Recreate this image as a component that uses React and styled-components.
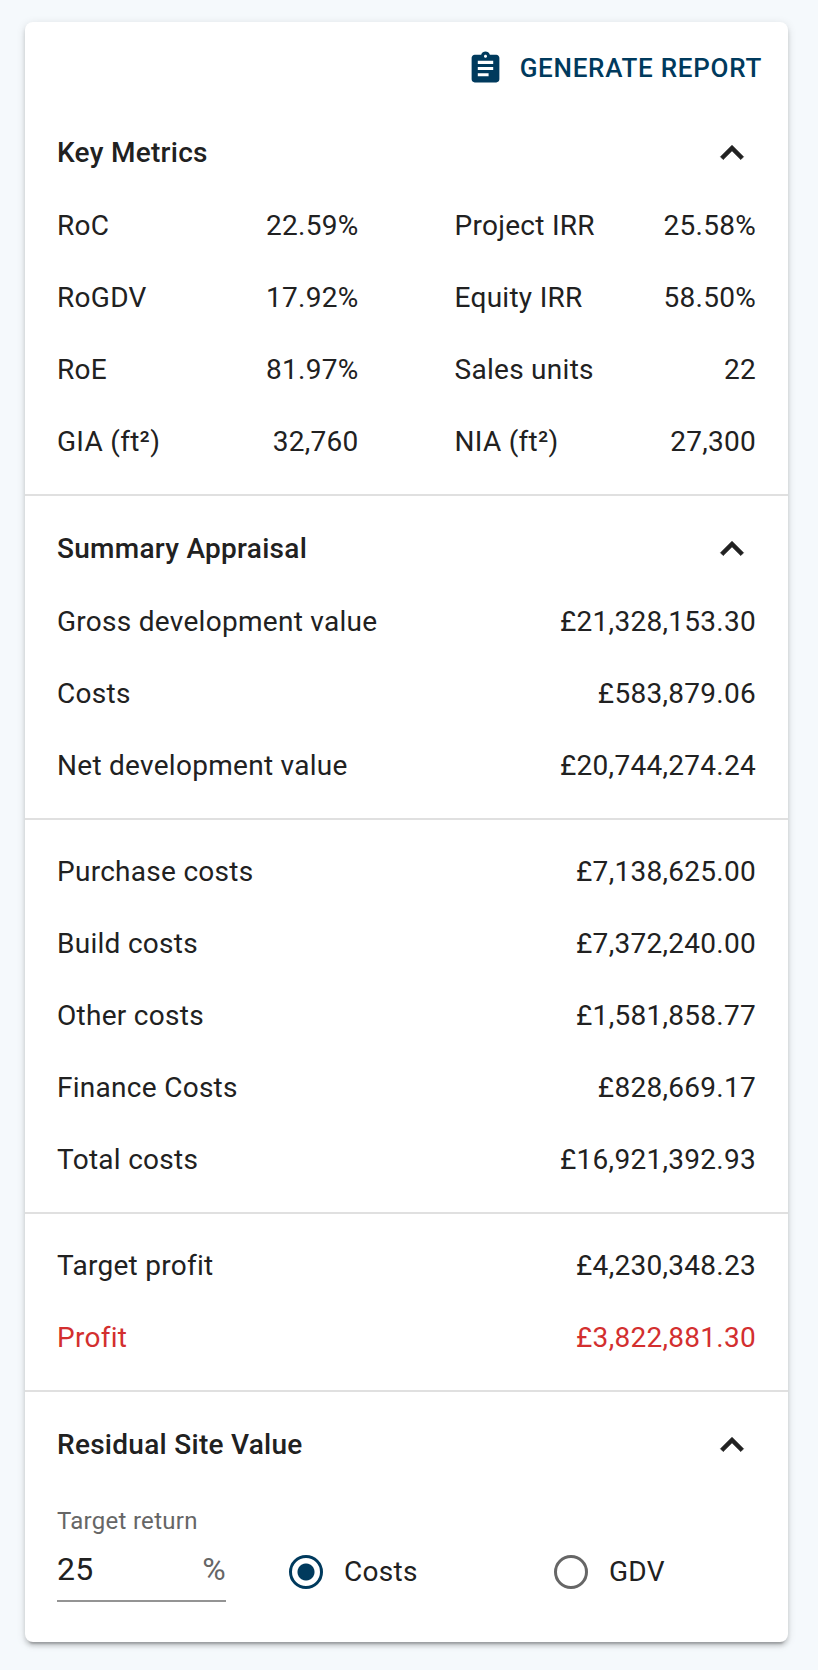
import React, { useState } from 'react';
import styled, { createGlobalStyle } from 'styled-components';
import { MdAssignment, MdKeyboardArrowUp, MdKeyboardArrowDown } from 'react-icons/md';

const GlobalStyle = createGlobalStyle`
  * {
    box-sizing: border-box;
  }

  body {
    margin: 0;
    background-color: #f5f9fc;
    color: #212121;
    font-family: Roboto, 'Liberation Sans', sans-serif;
    font-size: 28px;
    line-height: 40px;
    letter-spacing: 0.01em;
    -webkit-font-smoothing: antialiased;
  }
`;

const StyledPage = styled.main`
  padding: 22px 30px 28px 25px;
`;

const StyledCard = styled.div`
  background-color: #fff;
  border-radius: 8px;
  box-shadow: 0 6px 2px -4px rgba(0, 0, 0, 0.2), 0 4px 4px 0 rgba(0, 0, 0, 0.14),
    0 2px 10px 0 rgba(0, 0, 0, 0.12);
`;

const StyledToolbar = styled.div`
  display: flex;
  justify-content: flex-end;
  padding: 16px 10px 2px;
`;

const StyledReportButton = styled.button`
  display: flex;
  align-items: center;
  gap: 16px;
  height: 60px;
  padding: 0 16px;
  border: none;
  border-radius: 8px;
  background-color: transparent;
  color: #003a5d;
  font-family: inherit;
  font-size: 26px;
  font-weight: 500;
  letter-spacing: 0.028em;
  text-transform: uppercase;
  cursor: pointer;

  svg {
    font-size: 37px;
  }
`;

const StyledSection = styled.section`
  padding: 16px 32px;
  border-bottom: ${({ $last }) => ($last ? 'none' : '2px solid #e0e0e0')};
`;

const StyledHeading = styled.h2`
  margin: 0;
  font-size: 28px;
  font-weight: 500;
`;

const StyledToggle = styled.button`
  display: flex;
  align-items: center;
  justify-content: space-between;
  width: 100%;
  height: 74px;
  padding: 0;
  border: none;
  background-color: transparent;
  color: inherit;
  font: inherit;
  letter-spacing: inherit;
  cursor: pointer;

  svg {
    width: 48px;
    height: 48px;
    padding: 1px;
    stroke-width: 0.4;
    stroke-linejoin: round;
  }

  /* the icon's invisible bounding box must not pick up the stroke */
  path[fill='none'] {
    stroke: none;
  }
`;

const StyledMetrics = styled.div`
  display: grid;
  grid-template-columns: 1fr 1fr;
  gap: 96px;
`;

const StyledTable = styled.table`
  width: 100%;
  border-collapse: collapse;
`;

const StyledRow = styled.tr`
  height: 72px;
  color: ${({ $negative }) => ($negative ? '#d32f2f' : 'inherit')};
`;

const StyledLabel = styled.th`
  padding: 0;
  font-weight: 400;
  text-align: left;
`;

const StyledValue = styled.td`
  padding: 0;
  text-align: right;
`;

const StyledForm = styled.form`
  display: grid;
  grid-template-columns: minmax(0, 232fr) minmax(0, 265fr) minmax(0, 202fr);
  align-items: end;
  padding: 22px 0 24px;
`;

const StyledField = styled.div`
  padding-right: 63px;
`;

const StyledFieldLabel = styled.label`
  display: block;
  color: #666;
  font-size: 24px;
  line-height: 34px;
`;

const StyledInputRow = styled.div`
  display: flex;
  align-items: center;
  height: 64px;
  border-bottom: 2px solid #949494;
`;

const StyledInput = styled.input`
  flex: 1;
  width: 100%;
  min-width: 0;
  padding: 0;
  border: none;
  outline: none;
  background-color: transparent;
  color: inherit;
  font-family: inherit;
  font-size: 32px;
  letter-spacing: inherit;
`;

const StyledSuffix = styled.span`
  color: #666;
  font-size: 32px;
`;

const StyledOption = styled.label`
  display: flex;
  align-items: center;
  gap: 21px;
  height: 60px;
  cursor: pointer;
`;

const StyledRadio = styled.input`
  appearance: none;
  flex: none;
  width: 34px;
  height: 34px;
  margin: 0;
  border: 3px solid #666;
  border-radius: 50%;
  cursor: pointer;

  &:checked {
    border-color: #003a5d;
    background: radial-gradient(circle, #003a5d 8px, transparent 9px);
  }
`;

const metricsLeft = [
  { label: 'RoC', value: '22.59%' },
  { label: 'RoGDV', value: '17.92%' },
  { label: 'RoE', value: '81.97%' },
  { label: 'GIA (ft²)', value: '32,760' },
];

const metricsRight = [
  { label: 'Project IRR', value: '25.58%' },
  { label: 'Equity IRR', value: '58.50%' },
  { label: 'Sales units', value: '22' },
  { label: 'NIA (ft²)', value: '27,300' },
];

const appraisal = [
  { label: 'Gross development value', value: '£21,328,153.30' },
  { label: 'Costs', value: '£583,879.06' },
  { label: 'Net development value', value: '£20,744,274.24' },
];

const costs = [
  { label: 'Purchase costs', value: '£7,138,625.00' },
  { label: 'Build costs', value: '£7,372,240.00' },
  { label: 'Other costs', value: '£1,581,858.77' },
  { label: 'Finance Costs', value: '£828,669.17' },
  { label: 'Total costs', value: '£16,921,392.93' },
];

const profit = [
  { label: 'Target profit', value: '£4,230,348.23' },
  { label: 'Profit', value: '£3,822,881.30', negative: true },
];

const Rows = ({ rows }) => (
  <StyledTable>
    <tbody>
      {rows.map(({ label, value, negative }) => (
        <StyledRow key={label} $negative={negative}>
          <StyledLabel scope="row">{label}</StyledLabel>
          <StyledValue>{value}</StyledValue>
        </StyledRow>
      ))}
    </tbody>
  </StyledTable>
);

const SectionHeader = ({ title, open, onToggle }) => (
  <StyledHeading>
    <StyledToggle type="button" aria-expanded={open} onClick={onToggle}>
      {title}
      {open ? <MdKeyboardArrowUp /> : <MdKeyboardArrowDown />}
    </StyledToggle>
  </StyledHeading>
);

const App = () => {
  const [open, setOpen] = useState({ metrics: true, appraisal: true, residual: true });
  const [target, setTarget] = useState('25');
  const [basis, setBasis] = useState('Costs');

  const toggle = (name) => () => setOpen({ ...open, [name]: !open[name] });

  return (
    <StyledPage>
      <GlobalStyle />
      <StyledCard>
        <StyledToolbar>
          <StyledReportButton type="button">
            <MdAssignment />
            Generate report
          </StyledReportButton>
        </StyledToolbar>

        <StyledSection>
          <SectionHeader title="Key Metrics" open={open.metrics} onToggle={toggle('metrics')} />
          {open.metrics && (
            <StyledMetrics>
              <Rows rows={metricsLeft} />
              <Rows rows={metricsRight} />
            </StyledMetrics>
          )}
        </StyledSection>

        <StyledSection>
          <SectionHeader
            title="Summary Appraisal"
            open={open.appraisal}
            onToggle={toggle('appraisal')}
          />
          {open.appraisal && <Rows rows={appraisal} />}
        </StyledSection>
        {open.appraisal && (
          <>
            <StyledSection>
              <Rows rows={costs} />
            </StyledSection>
            <StyledSection>
              <Rows rows={profit} />
            </StyledSection>
          </>
        )}

        <StyledSection $last>
          <SectionHeader
            title="Residual Site Value"
            open={open.residual}
            onToggle={toggle('residual')}
          />
          {open.residual && (
            <StyledForm onSubmit={(e) => e.preventDefault()}>
              <StyledField>
                <StyledFieldLabel htmlFor="target-return">Target return</StyledFieldLabel>
                <StyledInputRow>
                  <StyledInput
                    id="target-return"
                    type="text"
                    inputMode="decimal"
                    value={target}
                    onChange={(e) => setTarget(e.target.value)}
                  />
                  <StyledSuffix>%</StyledSuffix>
                </StyledInputRow>
              </StyledField>
              {['Costs', 'GDV'].map((name) => (
                <StyledOption key={name}>
                  <StyledRadio
                    type="radio"
                    name="basis"
                    value={name}
                    checked={basis === name}
                    onChange={() => setBasis(name)}
                  />
                  {name}
                </StyledOption>
              ))}
            </StyledForm>
          )}
        </StyledSection>
      </StyledCard>
    </StyledPage>
  );
};

export default App;
